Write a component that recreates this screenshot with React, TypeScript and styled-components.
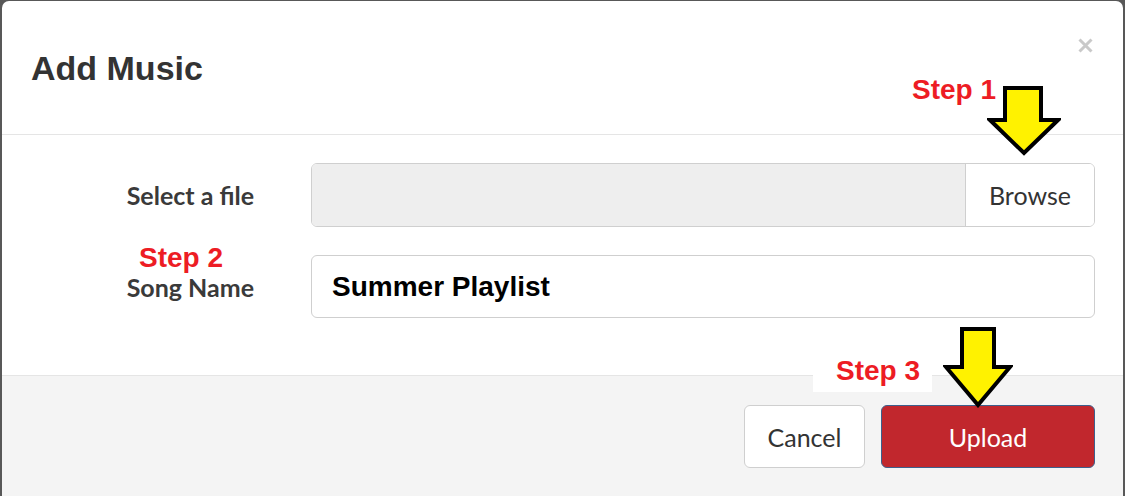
import React from 'react';
import styled, { createGlobalStyle } from 'styled-components';

const GlobalStyle = createGlobalStyle`
  html, body {
    margin: 0;
    padding: 0;
    background: #585858;
    overflow: hidden;
  }
  * {
    box-sizing: border-box;
  }
`;

const Modal = styled.div`
  position: relative;
  margin: 1px 2px 0 2px;
  height: 495px;
  background: #fff;
  border-radius: 7px 7px 0 0;
  overflow: hidden;
  display: flex;
  flex-direction: column;
  font-family: 'Lato', 'Noto Sans', sans-serif;
`;

const Header = styled.div`
  height: 134px;
  flex: none;
  display: flex;
  justify-content: space-between;
  align-items: flex-start;
  padding: 0 30px 0 29px;
  border-bottom: 1px solid #e5e5e5;
`;

const Title = styled.h2`
  margin: 50px 0 0;
  font-family: 'Liberation Sans', Arial, sans-serif;
  font-size: 34px;
  line-height: 1;
  font-weight: 700;
  color: #333;
`;

const CloseButton = styled.button`
  margin-top: 37px;
  padding: 0;
  border: 0;
  background: none;
  width: 15px;
  height: 15px;
  display: flex;
`;

const Body = styled.div`
  flex: none;
  display: grid;
  grid-template-columns: 252px 1fr;
  column-gap: 57px;
  row-gap: 28px;
  padding: 28px 28px 57px 0;
`;

const Label = styled.label`
  align-self: center;
  text-align: right;
  font-size: 25px;
  font-weight: 700;
  color: #3a3a3a;
`;

const FileGroup = styled.div`
  display: flex;
  height: 64px;
  border: 1px solid #cfcfcf;
  border-radius: 6px;
  overflow: hidden;
`;

const FileName = styled.div`
  flex: 1;
  background: #eee;
`;

const BrowseButton = styled.button`
  width: 129px;
  border: 0;
  border-left: 1px solid #cfcfcf;
  background: #fff;
  font-family: 'Lato', 'Noto Sans', sans-serif;
  font-size: 25px;
  color: #333;
  padding: 0;
`;

const TextInput = styled.input`
  height: 63px;
  border: 1px solid #cfcfcf;
  border-radius: 6px;
  padding: 0 20px;
  font-family: 'Liberation Sans', Arial, sans-serif;
  font-size: 28px;
  font-weight: 700;
  color: #000;
  outline: none;
`;

const Footer = styled.div`
  flex: 1;
  display: flex;
  justify-content: flex-end;
  align-items: flex-start;
  gap: 16px;
  padding: 29px 28px 0 0;
  border-top: 1px solid #e5e5e5;
  background: #f4f4f4;
`;

const Button = styled.button<{ $primary?: boolean; $width: number }>`
  width: ${(p) => p.$width}px;
  height: 63px;
  border-radius: 6px;
  font-family: 'Lato', 'Noto Sans', sans-serif;
  font-size: 25px;
  padding: 0;
  color: ${(p) => (p.$primary ? '#fff' : '#333')};
  background: ${(p) => (p.$primary ? '#c1272d' : '#fff')};
  border: 1px solid ${(p) => (p.$primary ? '#3d5f8c' : '#cfcfcf')};
`;

const StepNote = styled.span<{ $x: number; $y: number; $boxed?: boolean }>`
  position: absolute;
  left: ${(p) => p.$x}px;
  top: ${(p) => p.$y}px;
  font-family: 'Liberation Sans', Arial, sans-serif;
  font-weight: 700;
  font-size: 28px;
  line-height: ${(p) => (p.$boxed ? '36px' : '1')};
  color: #ed1c24;
  background: ${(p) => (p.$boxed ? '#fff' : 'transparent')};
  padding: ${(p) => (p.$boxed ? '0 12px 3px 23px' : '0')};
`;

const ArrowWrap = styled.div<{ $x: number; $y: number }>`
  position: absolute;
  left: ${(p) => p.$x}px;
  top: ${(p) => p.$y}px;
  line-height: 0;
`;

const Arrow: React.FC<{ x: number; y: number; w: number; h: number; points: string }> = ({
  x,
  y,
  w,
  h,
  points,
}) => (
  <ArrowWrap $x={x} $y={y}>
    <svg width={w} height={h} viewBox={`0 0 ${w} ${h}`}>
      <polygon points={points} fill="#fff200" stroke="#000" strokeWidth={4} strokeLinejoin="miter" />
    </svg>
  </ArrowWrap>
);

export default function App() {
  return (
    <>
      <GlobalStyle />
      <Modal>
        <Header>
          <Title>Add Music</Title>
          <CloseButton aria-label="Close">
            <svg width="15" height="15" viewBox="0 0 15 15">
              <path d="M1.5 1.5 L13.5 13.5 M13.5 1.5 L1.5 13.5" stroke="#c9c9c9" strokeWidth="3" />
            </svg>
          </CloseButton>
        </Header>
        <Body>
          <Label>Select a file</Label>
          <FileGroup>
            <FileName />
            <BrowseButton>Browse</BrowseButton>
          </FileGroup>
          <Label>Song Name</Label>
          <TextInput defaultValue="Summer Playlist" />
        </Body>
        <Footer>
          <Button $width={121}>Cancel</Button>
          <Button $width={214} $primary>
            Upload
          </Button>
        </Footer>

        <StepNote $x={910} $y={75}>Step 1</StepNote>
        <StepNote $x={137} $y={243}>Step 2</StepNote>
        <StepNote $x={811} $y={352} $boxed>
          Step 3
        </StepNote>
        <Arrow x={985} y={85} w={74} h={70} points="18,2 54,2 54,34 71,34 37,67 3,34 18,34" />
        <Arrow x={941} y={326} w={70} h={81} points="19,2 51,2 51,40 67,40 35,78 3,40 19,40" />
      </Modal>
    </>
  );
}
